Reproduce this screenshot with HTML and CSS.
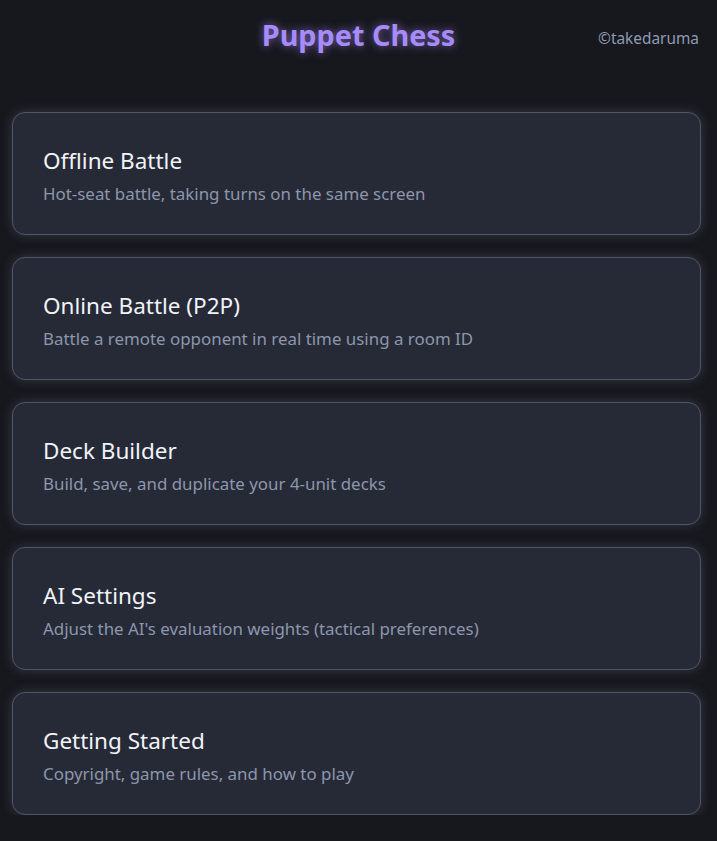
FILE: index.html
```html
<!DOCTYPE html>
<html lang="en">
<head>
<meta charset="utf-8">
<title>Puppet Chess</title>
<link rel="stylesheet" href="styles.css">
</head>
<body>
<header class="header">
  <h1 class="title">Puppet Chess</h1>
  <span class="credit">©takedaruma</span>
</header>
<main class="menu">
  <div class="card">
    <div class="card-title">Offline Battle</div>
    <div class="card-desc">Hot-seat battle, taking turns on the same screen</div>
  </div>
  <div class="card">
    <div class="card-title">Online Battle (P2P)</div>
    <div class="card-desc">Battle a remote opponent in real time using a room ID</div>
  </div>
  <div class="card">
    <div class="card-title">Deck Builder</div>
    <div class="card-desc">Build, save, and duplicate your 4-unit decks</div>
  </div>
  <div class="card">
    <div class="card-title">AI Settings</div>
    <div class="card-desc">Adjust the AI's evaluation weights (tactical preferences)</div>
  </div>
  <div class="card">
    <div class="card-title">Getting Started</div>
    <div class="card-desc">Copyright, game rules, and how to play</div>
  </div>
</main>
</body>
</html>
```

FILE: styles.css
```css
html, body {
  margin: 0;
  padding: 0;
  background: #17181e;
  font-family: "Noto Sans", "Open Sans", sans-serif;
  overflow: hidden;
}
.header {
  position: relative;
  height: 70px;
  display: flex;
  justify-content: center;
  align-items: center;
}
.title {
  margin: 0 0 2px 0;
  font-size: 28.8px;
  font-weight: 700;
  color: #a78bfa;
  text-shadow: 0 0 8px rgba(167, 139, 250, 0.65);
  letter-spacing: 0;
}
.credit {
  position: absolute;
  right: 18px;
  top: 28px;
  font-size: 15.4px;
  color: #8e9bb3;
}
.menu {
  display: flex;
  flex-direction: column;
  gap: 22px;
  padding: 42px 16px 0 12px;
}
.card {
  height: 123px;
  box-sizing: border-box;
  background: #262a37;
  border: 1px solid #50566a;
  border-radius: 13px;
  box-shadow: 0 0 12px rgba(130, 135, 155, 0.3);
  padding: 5px 30px 0;
  display: flex;
  flex-direction: column;
  justify-content: center;
  gap: 6px;
}
.card-title {
  font-size: 22.5px;
  color: #f1f3f7;
  line-height: 30px;
}
.card-desc {
  font-size: 16.9px;
  color: #8d96ab;
  line-height: 24px;
}
```
